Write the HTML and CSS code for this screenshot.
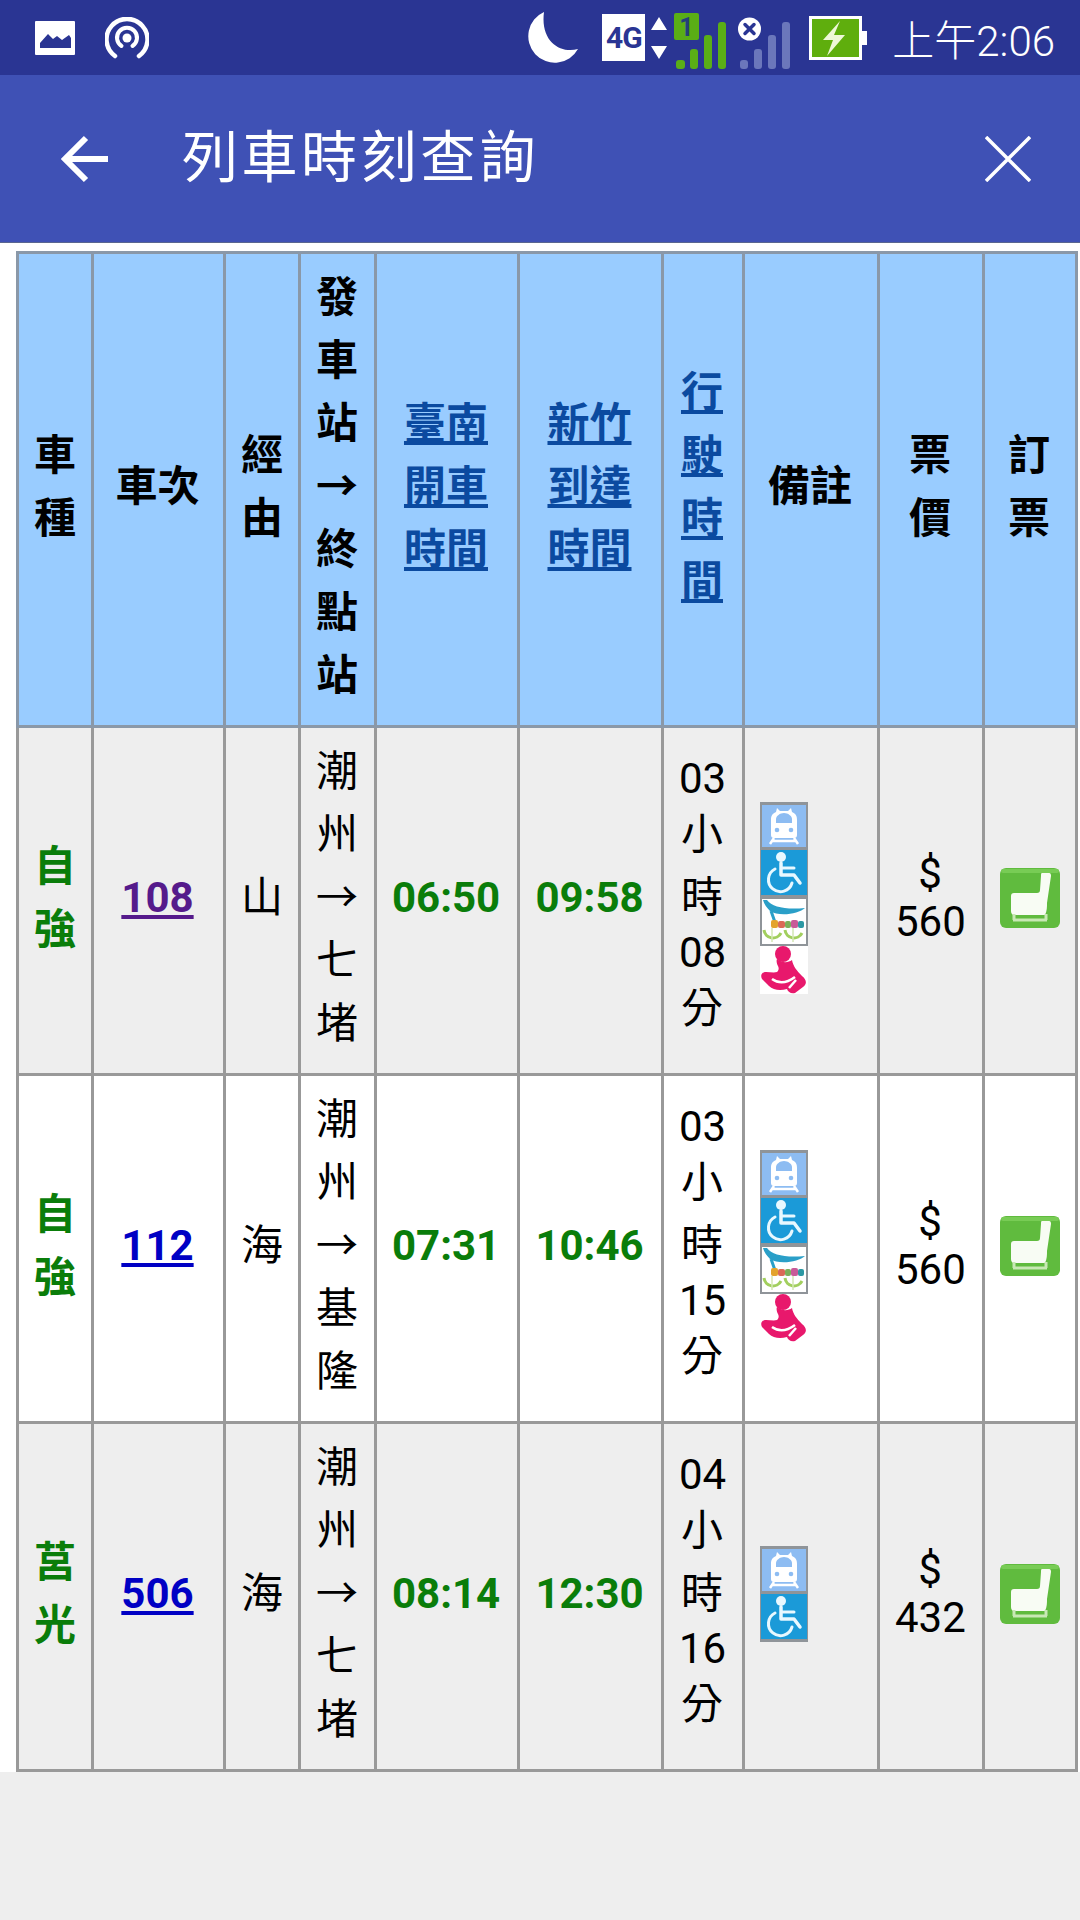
FILE: index.html
```html
<!DOCTYPE html>
<html lang="zh-Hant">
<head>
  <meta charset="UTF-8">
  <meta name="viewport" content="width=device-width, initial-scale=1.0">
  <title>列車時刻查詢</title>
  <link rel="stylesheet" href="styles.css">
</head>
<body>
  <svg class="icon-defs" width="0" height="0">
    <symbol id="icon-train" viewBox="0 0 48 48">
      <rect width="48" height="48" fill="#8f9499"/>
      <rect x="2" y="3" width="44" height="42" fill="#8dbcf2"/>
      <path d="M17 6l3 3h8l3-3 1 4c4 2 5 4 5 8v15c0 2-1 3-3 3H14c-2 0-3-1-3-3V18c0-4 1-6 5-8z" fill="#fff"/>
      <path d="M16 21v-4c0-3 4-6 8-6s8 3 8 6v4z" fill="#8dbcf2"/>
      <circle cx="17" cy="28" r="2.300" fill="#8dbcf2"/>
      <circle cx="31" cy="28" r="2.300" fill="#8dbcf2"/>
      <path d="M14 36l-4 6M34 36l4 6M12 39h24" stroke="#fff" stroke-width="2.500" fill="none"/>
    </symbol>
    <symbol id="icon-wheelchair" viewBox="0 0 48 48">
      <rect width="48" height="48" fill="#8f9499"/>
      <rect x="1" y="0" width="46" height="45" fill="#1b9ad8"/>
      <circle cx="21" cy="7" r="5" fill="#e8f8ff"/>
      <path d="M21 13v12h13l6 8" stroke="#e8f8ff" stroke-width="3.500" fill="none" stroke-linecap="round" stroke-linejoin="round"/>
      <path d="M22 18h12" stroke="#e8f8ff" stroke-width="3" stroke-linecap="round"/>
      <path d="M15 19a12 12 0 1 0 17 14" stroke="#e8f8ff" stroke-width="3" fill="none" stroke-linecap="round"/>
    </symbol>
    <symbol id="icon-bike" viewBox="0 0 48 48">
      <rect width="48" height="48" fill="#8f9499"/>
      <rect x="2" y="1" width="44" height="45" fill="#fff"/>
      <path d="M3 2h4c5 7 19 10 38 8-6 6-26 9-35 3C7 10 4 6 3 2z" fill="#2a9fc8"/>
      <path d="M11 13l5 14" stroke="#2a9fc8" stroke-width="3"/>
      <rect x="11" y="22" width="7" height="8" rx="2" fill="#e3a32c"/>
      <rect x="18" y="23" width="7" height="7" rx="2" fill="#db6a57"/>
      <rect x="25" y="23" width="6" height="7" rx="2" fill="#7db05a"/>
      <rect x="31" y="22" width="7" height="8" rx="2" fill="#c85a98"/>
      <rect x="38" y="23" width="6" height="7" rx="2" fill="#2c98a4"/>
      <path d="M4 32a9 9 0 0 0 17 3M25 32a9 9 0 0 0 17 3" fill="none" stroke="#a2cf5e" stroke-width="3"/>
      <path d="M12 30v14M33 30v14" stroke="#d4e8b4" stroke-width="1.500"/>
    </symbol>
    <symbol id="icon-nursing" viewBox="0 0 48 48">
      <rect width="48" height="48" fill="#fff"/>
      <circle cx="23" cy="8" r="8" fill="#e8186c"/>
      <path d="M17 13C22 17 28 17 32 14C33 20 37 25 42 30C47 34 47 38 43 41L35 47C31 48 28 46 27 43C20 45 13 44 9 40L2 33C0 29 2 26 6 26C10 26 14 27 17 26C19 24 19 22 18 20C17 18 16 15 17 13Z" fill="#e8186c"/>
      <path d="M12 33C19 38 27 37 35 31M36 34L29 42" stroke="#fff" stroke-width="2.500" fill="none"/>
    </symbol>
    <symbol id="icon-seat" viewBox="0 0 60 60">
      <rect width="60" height="60" rx="6" fill="#60bb3e"/>
      <rect x="1" y="1" width="58" height="4" rx="2" fill="#78cc55"/>
      <path d="M42 5h7c2 0 2 2 2 3l-4 27c0 4 0 8-2 12H14c-2 0-3-2-3-4V28c0-2 1-3 3-3h23c2 0 3-1 3-3l1-14c0-2 0-3 1-3z" fill="#f8fcf4"/>
      <path d="M14 46v6M46 46v6M13 52h34" stroke="#c8e8b4" stroke-width="3" fill="none"/>
    </symbol>
  </svg>

  <header class="status-bar">
    <div class="status-left">
      <svg class="ic-picture" viewBox="0 0 40 34">
        <path d="M0 1a1 1 0 0 1 1-1h38a1 1 0 0 1 1 1v32a1 1 0 0 1-1 1H1a1 1 0 0 1-1-1z" fill="#fff"/>
        <path d="M5 27v-5l8-9 5 5 4-3 5 4 7-5 2 3v10z" fill="#2a3593"/>
      </svg>
      <svg class="ic-hotspot" viewBox="0 0 44 42">
        <circle cx="22" cy="21" r="4.500" fill="#fff"/>
        <path d="M16.500 29a10 10 0 1 1 11 0" fill="none" stroke="#fff" stroke-width="4" stroke-linecap="round"/>
        <path d="M10 39a20.500 20.500 0 1 1 24 0" fill="none" stroke="#fff" stroke-width="4.500" stroke-linecap="round"/>
      </svg>
    </div>
    <div class="status-right">
      <svg class="ic-moon" viewBox="0 0 50 52">
        <path d="M16 0A26.500 26.500 0 1 0 50 37C33 42 12 30 16 0z" fill="#fff"/>
      </svg>
      <span class="net-type">4G</span>
      <svg class="ic-arrows" viewBox="0 0 16 42">
        <path d="M8 0l8 13H0zM0 29h16L8 42z" fill="#fff"/>
      </svg>
      <svg class="ic-signal" viewBox="0 0 52 56">
        <rect x="0" y="0" width="25" height="27" rx="2" fill="#5aae16"/>
        <text x="12.500" y="23" class="sim-no">1</text>
        <rect x="2" y="47" width="9" height="9" rx="3" fill="#5aae16"/>
        <rect x="16" y="36" width="8" height="20" rx="3" fill="#5aae16"/>
        <rect x="30" y="22" width="8" height="34" rx="3" fill="#5aae16"/>
        <rect x="44" y="9" width="8" height="47" rx="3" fill="#5aae16"/>
      </svg>
      <svg class="ic-nosignal" viewBox="0 0 52 52">
        <rect x="2" y="43" width="8" height="9" rx="3" fill="#6b77bb"/>
        <rect x="16" y="32" width="8" height="20" rx="3" fill="#6b77bb"/>
        <rect x="30" y="18" width="8" height="34" rx="3" fill="#6b77bb"/>
        <rect x="44" y="5" width="8" height="47" rx="3" fill="#6b77bb"/>
        <circle cx="11.500" cy="12" r="11.500" fill="#fff"/>
        <path d="M7 7.500l9 9M16 7.500l-9 9" stroke="#2a3593" stroke-width="3.500" stroke-linecap="round"/>
      </svg>
      <svg class="ic-battery" viewBox="0 0 58 44">
        <rect x="1.500" y="1.500" width="50" height="41" fill="#5fae0d" stroke="#fff" stroke-width="3"/>
        <rect x="53" y="15" width="5" height="14" fill="#fff"/>
        <path d="M31 5L14 24h10l-6 16 18-21H25z" fill="#eef8d8"/>
      </svg>
      <span class="clock">上午2:06</span>
    </div>
  </header>

  <div class="app-bar">
    <svg class="ic-back" viewBox="0 0 48 48">
      <path d="M48 24H5M26 3L5 24l21 21" fill="none" stroke="#fff" stroke-width="6"/>
    </svg>
    <h1 class="app-title">列車時刻查詢</h1>
    <svg class="ic-close" viewBox="0 0 46 46">
      <path d="M1 1l44 44M45 1L1 45" stroke="#fff" stroke-width="3.500"/>
    </svg>
  </div>

  <main class="content">
    <table class="timetable">
      <colgroup>
        <col class="col-type">
        <col class="col-no">
        <col class="col-via">
        <col class="col-route">
        <col class="col-dep">
        <col class="col-arr">
        <col class="col-dur">
        <col class="col-note">
        <col class="col-price">
        <col class="col-book">
      </colgroup>
      <thead>
        <tr>
          <th>車種</th>
          <th>車次</th>
          <th>經由</th>
          <th>發車站<span class="arrow">→</span>終點站</th>
          <th><a href="#">臺南開車時間</a></th>
          <th><a href="#">新竹到達時間</a></th>
          <th><a href="#">行駛時間</a></th>
          <th>備註</th>
          <th>票價</th>
          <th>訂票</th>
        </tr>
      </thead>
      <tbody>
        <tr class="row-alt">
          <td class="strong">自強</td>
          <td class="strong"><a class="visited" href="#">108</a></td>
          <td>山</td>
          <td>潮州<span class="arrow">→</span>七堵</td>
          <td class="strong">06:50</td>
          <td class="strong">09:58</td>
          <td class="dur"><span class="num">03</span><span>小</span><span>時</span><span class="num">08</span><span>分</span></td>
          <td class="note">
            <svg class="note-icon"><use href="#icon-train"/></svg>
            <svg class="note-icon"><use href="#icon-wheelchair"/></svg>
            <svg class="note-icon"><use href="#icon-bike"/></svg>
            <svg class="note-icon"><use href="#icon-nursing"/></svg>
          </td>
          <td class="price">$ 560</td>
          <td class="book"><svg class="seat-icon"><use href="#icon-seat"/></svg></td>
        </tr>
        <tr>
          <td class="strong">自強</td>
          <td class="strong"><a href="#">112</a></td>
          <td>海</td>
          <td>潮州<span class="arrow">→</span>基隆</td>
          <td class="strong">07:31</td>
          <td class="strong">10:46</td>
          <td class="dur"><span class="num">03</span><span>小</span><span>時</span><span class="num">15</span><span>分</span></td>
          <td class="note">
            <svg class="note-icon"><use href="#icon-train"/></svg>
            <svg class="note-icon"><use href="#icon-wheelchair"/></svg>
            <svg class="note-icon"><use href="#icon-bike"/></svg>
            <svg class="note-icon"><use href="#icon-nursing"/></svg>
          </td>
          <td class="price">$ 560</td>
          <td class="book"><svg class="seat-icon"><use href="#icon-seat"/></svg></td>
        </tr>
        <tr class="row-alt">
          <td class="strong">莒光</td>
          <td class="strong"><a href="#">506</a></td>
          <td>海</td>
          <td>潮州<span class="arrow">→</span>七堵</td>
          <td class="strong">08:14</td>
          <td class="strong">12:30</td>
          <td class="dur"><span class="num">04</span><span>小</span><span>時</span><span class="num">16</span><span>分</span></td>
          <td class="note">
            <svg class="note-icon"><use href="#icon-train"/></svg>
            <svg class="note-icon"><use href="#icon-wheelchair"/></svg>
          </td>
          <td class="price">$ 432</td>
          <td class="book"><svg class="seat-icon"><use href="#icon-seat"/></svg></td>
        </tr>
      </tbody>
    </table>
  </main>
</body>
</html>
```

FILE: styles.css
```css
* {
  box-sizing: border-box;
}
body {
  margin: 0;
  min-height: 1920px;
  background-color: #eeeeee;
  font-family: Roboto, "Noto Sans CJK TC", sans-serif;
}
svg {
  display: block;
  flex-shrink: 0;
}
.icon-defs {
  position: absolute;
}

/* status bar */
.status-bar {
  display: flex;
  justify-content: space-between;
  align-items: center;
  height: 75px;
  padding: 0 25px 0 35px;
  background-color: #2a3593;
  color: #fff;
}
.status-left,
.status-right {
  display: flex;
  align-items: center;
}
.ic-picture {
  width: 40px;
  height: 34px;
}
.ic-hotspot {
  width: 44px;
  height: 42px;
  margin-left: 30px;
}
.ic-moon {
  width: 50px;
  height: 52px;
}
.net-type {
  width: 43px;
  height: 47px;
  margin-left: 24px;
  background-color: #fff;
  color: #2a3593;
  font-size: 30px;
  font-weight: bold;
  line-height: 47px;
  letter-spacing: -1px;
  text-align: center;
}
.ic-arrows {
  width: 16px;
  height: 42px;
  margin-left: 6px;
}
.ic-signal {
  width: 52px;
  height: 56px;
  margin-left: 7px;
  margin-top: 6px;
}
.sim-no {
  font-size: 25px;
  font-weight: bold;
  fill: #24407a;
  text-anchor: middle;
}
.ic-nosignal {
  width: 52px;
  height: 52px;
  margin-left: 12px;
  margin-top: 10px;
}
.ic-battery {
  width: 58px;
  height: 44px;
  margin-left: 19px;
}
.clock {
  margin-left: 25px;
  font-size: 42px;
  font-weight: 300;
}

/* app bar */
.app-bar {
  display: flex;
  align-items: center;
  height: 168px;
  padding: 0 49px 0 60px;
  background-color: #3f51b5;
  border-bottom: 1px solid #5a6690;
}
.ic-back {
  width: 48px;
  height: 48px;
}
.app-title {
  flex: 1;
  margin: 0 0 12px 74px;
  color: #fff;
  font-family: "Noto Sans CJK TC", sans-serif;
  font-size: 56px;
  font-weight: 400;
  letter-spacing: 3.500px;
}
.ic-close {
  width: 46px;
  height: 46px;
}

/* table */
.content {
  padding: 8px 0 0 16px;
  background-color: #fff;
}
.timetable {
  width: 1061px;
  table-layout: fixed;
  border-collapse: collapse;
  font-size: 42px;
  line-height: 63px;
  text-align: center;
}
.col-type { width: 75px; }
.col-no { width: 132px; }
.col-via { width: 75px; }
.col-route { width: 76px; }
.col-dep { width: 143px; }
.col-arr { width: 144px; }
.col-dur { width: 81px; }
.col-note { width: 135px; }
.col-price { width: 105px; }
.col-book { width: 93px; }

.timetable th,
.timetable td {
  padding: 12px 17px 18px 15px;
  border: 3px solid #999;
}
.timetable th {
  background-color: #99ccff;
  border-color: #8a98a8;
}
.timetable th a {
  color: #0b4aa0;
}
.timetable tbody tr {
  background-color: #fff;
}
.timetable tbody tr.row-alt {
  background-color: #eeeeee;
}
.timetable .strong {
  color: #0a7d0a;
  font-weight: bold;
}
.timetable td a {
  color: #0000c4;
}
.timetable td a.visited {
  color: #551a8b;
}
.arrow {
  font-family: "Noto Sans CJK TC", sans-serif;
  line-height: 1;
}
.dur span {
  display: block;
}
.dur .num {
  line-height: 48px;
}
.price {
  line-height: 48px;
}
.note-icon {
  width: 48px;
  height: 48px;
}
.seat-icon {
  width: 60px;
  height: 60px;
}
```
